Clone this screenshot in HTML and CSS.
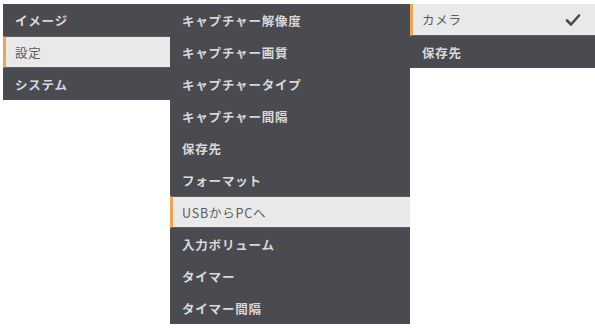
FILE: index.html
```html
<!DOCTYPE html>
<html lang="ja">
<head>
<meta charset="utf-8">
<link rel="stylesheet" href="styles.css">
</head>
<body>
<div class="menus">
  <ul class="col col1">
    <li class="item">イメージ</li>
    <li class="item sel">設定</li>
    <li class="item">システム</li>
  </ul>
  <ul class="col col2">
    <li class="item">キャプチャー解像度</li>
    <li class="item">キャプチャー画質</li>
    <li class="item">キャプチャータイプ</li>
    <li class="item">キャプチャー間隔</li>
    <li class="item">保存先</li>
    <li class="item">フォーマット</li>
    <li class="item sel">USBからPCへ</li>
    <li class="item">入力ボリューム</li>
    <li class="item">タイマー</li>
    <li class="item">タイマー間隔</li>
  </ul>
  <ul class="col col3">
    <li class="item sel"><span>カメラ</span>
      <svg class="check" viewBox="0 0 16 14" width="16" height="14"><path d="M2 7.5 L6 11.5 L14 2.5" fill="none" stroke="#4a4b50" stroke-width="2.6" stroke-linecap="round" stroke-linejoin="round"/></svg>
    </li>
    <li class="item">保存先</li>
  </ul>
</div>
</body>
</html>
```
FILE: styles.css
```css
html, body {
  margin: 0;
  padding: 0;
  background: #ffffff;
}
body {
  width: 595px;
  height: 328px;
  overflow: hidden;
  font-family: "Noto Sans CJK JP", "Noto Sans", sans-serif;
}
.menus {
  display: flex;
  align-items: flex-start;
  padding-top: 4px;
  padding-left: 3px;
}
.col {
  list-style: none;
  margin: 0;
  padding: 0;
  background: #4a4b51;
}
.col1 { width: 167px; }
.col2 { width: 240px; }
.col3 { width: 185px; }
.item {
  height: 32px;
  display: flex;
  align-items: center;
  justify-content: space-between;
  padding: 0 14px 0 12px;
  box-sizing: border-box;
  color: #d9d9db;
  font-size: 12.5px;
  font-weight: bold;
  letter-spacing: 0.8px;
}
.item.sel {
  background: #e9e9ea;
  color: #5a5b60;
  font-weight: normal;
  border-left: 3px solid #f0a455;
  padding-left: 9px;
  border-top: 1px solid #5e5f64;
  border-bottom: 1px solid #5e5f64;
}
.col3 .item.sel {
  border-top: none;
}
.check {
  display: block;
}
```
